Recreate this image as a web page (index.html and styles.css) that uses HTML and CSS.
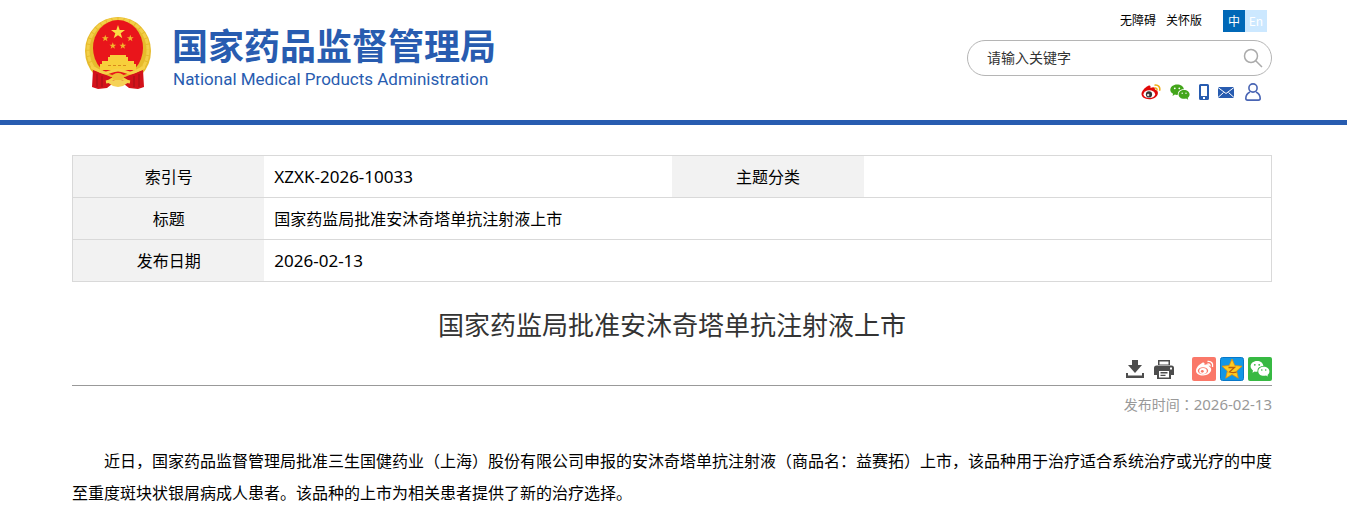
FILE: index.html
```html
<!DOCTYPE html>
<html lang="zh-CN">
<head>
<meta charset="utf-8">
<meta name="viewport" content="width=device-width, initial-scale=1">
<title>国家药监局批准安沐奇塔单抗注射液上市</title>
<link rel="stylesheet" href="styles.css">
</head>
<body>
<header class="header">
  <a class="brand" href="#">
    <svg class="emblem" viewBox="0 0 68 74" aria-hidden="true">
      <ellipse cx="34" cy="35" rx="33" ry="34" fill="#e6bb2c"/>
      <ellipse cx="34" cy="34" rx="30" ry="31" fill="none" stroke="#f3cf48" stroke-width="3" stroke-dasharray="5 1"/>
      <ellipse cx="34" cy="32" rx="25" ry="28" fill="#e9151b"/>
      <path fill="#fbdc45" d="M34 9l1.700 5h5.300l-4.300 3.200 1.600 5.100-4.300-3.100-4.300 3.100 1.600-5.100L27 14h5.300z"/>
      <g fill="#f3b52b">
        <path id="star" d="M21.300 18.800l.9 2.400h2.500l-2 1.600.7 2.500-2.100-1.500-2.100 1.500.7-2.500-2-1.600h2.500z"/>
        <use href="#star" x="25"/><use href="#star" x="7.500" y="7.500"/><use href="#star" x="17.500" y="7.500"/>
      </g>
      <path fill="#f7cf3b" d="M26 39h16v2h2v4h6v3h2v6H16v-6h2v-3h6v-4h2z"/>
      <path stroke="#d98a1b" stroke-dasharray="3 2" d="M24 49.500h20"/>
      <path fill="#d3121b" d="M9 54l11 4 7 3h14l7-3 11-4 1 17-6 2-9-1-5-4H28l-5 4-9 1-6-2z"/>
      <path fill="none" stroke="#f6d149" stroke-width="3" d="M7 51c5 1 9 6 15 6 4 0 6-3 12-3s8 3 12 3c6 0 10-5 15-6M22 66c6-1 7-5 12-5s6 4 12 5"/>
      <ellipse cx="34" cy="61" rx="6" ry="4" fill="#efbf36"/>
      <path fill="#f5d257" d="M23 66l8-2h6l8 2-6 4-5 1-5-1z"/>
      <path fill="none" stroke="#9f1018" d="M13 58v13M18 60v11M50 60v11M55 58v13"/>
    </svg>
    <span class="brand-text">
      <span class="brand-cn">国家药品监督管理局</span>
      <span class="brand-en" lang="en">National Medical Products Administration</span>
    </span>
  </a>
  <div class="tools">
    <nav class="top-links">
      <a class="text-link" href="#">无障碍</a>
      <a class="text-link" href="#">关怀版</a>
      <span class="langs"><a class="lang-cn" href="#">中</a><a class="lang-en" href="#" lang="en">En</a></span>
    </nav>
    <form class="search">
      <input type="text" class="search-input" placeholder="请输入关键字" aria-label="请输入关键字">
      <button class="search-button" type="button" aria-label="搜索">
        <svg width="20" height="20" viewBox="0 0 20 20" fill="none" stroke="#aaa" stroke-width="1.500"><circle cx="8" cy="8" r="6.500"/><path d="M12.500 12.500l6.500 6.500"/></svg>
      </button>
    </form>
    <div class="contacts">
      <a href="#" aria-label="微博"><svg width="20" height="16" viewBox="0 0 20 16">
        <path fill="#e10808" d="M7 2c2-1 3 0 2.500 2 3-1.300 5-.7 4.400 1.500 2 .6 3 1.700 3 3.400 0 3.500-4 6.300-8.700 6.300C3.600 15.200.5 13 .5 10 .5 7 4 3.400 7 2z"/>
        <ellipse cx="8.300" cy="10.200" rx="5.800" ry="3.900" fill="#fff"/><circle cx="8" cy="10.400" r="3.100" fill="#333"/><circle cx="7.200" cy="11" r="1.200" fill="#ddd"/>
        <path d="M13.500 1.200c3.700-.7 6.200 2 5 5.500M13.500 4c1.800-.3 2.900.8 2.400 2.400" fill="none" stroke="#efac10" stroke-width="1.500"/></svg></a>
      <a href="#" aria-label="微信"><svg width="20" height="16" viewBox="0 0 20 16" fill="#43a51a">
        <path d="M7 .5c3.800 0 6.500 2 6.900 4.700C10.300 5 7.600 7.300 7.900 10.800c-1 .2-2 .1-3-.2L2.500 12l.6-2.300C1.200 8.600.3 7.400.3 5.700.3 2.800 3.300.5 7 .5z"/>
        <path d="M14 6c3.200 0 5.600 2 5.600 4.500 0 1.400-.7 2.500-1.900 3.300l.5 1.900-2.100-1.100c-4.200 1-7.500-1.100-7.500-4.100C8.600 8 11 6 14 6z"/>
        <g fill="#fff"><circle cx="4.800" cy="4.300" r=".9"/><circle cx="9.300" cy="4.300" r=".9"/><circle cx="12.200" cy="9.200" r=".7"/><circle cx="16" cy="9.200" r=".7"/></g></svg></a>
      <a href="#" aria-label="手机"><svg width="10" height="16" viewBox="0 0 10 16"><path fill="#285cb0" fill-rule="evenodd" d="M1.500 0h7Q10 0 10 1.500v13Q10 16 8.500 16h-7Q0 16 0 14.500v-13Q0 0 1.500 0zM2 2v10h6V2zM4 13v2h2v-2z"/></svg></a>
      <a href="#" aria-label="邮箱"><svg width="16" height="11" viewBox="0 0 16 11"><path fill="#285cb0" d="M0 0h16v11H0z"/><path fill="none" stroke="#fff" d="M0 .5l8 6 8-6M0 10.500l5.500-5M16 10.500l-5.500-5"/></svg></a>
      <a href="#" aria-label="用户"><svg width="16" height="18" viewBox="0 0 16 18" fill="none" stroke="#4965b4" stroke-width="1.600"><circle cx="8" cy="5" r="4.100"/><path d="M5 9C2.300 10.300.9 12.300.8 15.300q0 1.800 1.700 1.800h11q1.700 0 1.700-1.800C15.100 12.300 13.700 10.300 11 9"/></svg></a>
    </div>
  </div>
</header>
<main class="main">
  <table class="info">
    <colgroup><col class="col-label"><col class="col-value"><col class="col-label"><col class="col-value"></colgroup>
    <tbody>
      <tr><th scope="row">索引号</th><td class="number">XZXK-2026-10033</td><th scope="row">主题分类</th><td></td></tr>
      <tr><th scope="row">标题</th><td colspan="3">国家药监局批准安沐奇塔单抗注射液上市</td></tr>
      <tr><th scope="row">发布日期</th><td colspan="3" class="number">2026-02-13</td></tr>
    </tbody>
  </table>
  <h1 class="title">国家药监局批准安沐奇塔单抗注射液上市</h1>
  <div class="actions">
    <button type="button" aria-label="下载"><svg width="18" height="18" viewBox="0 0 18 18" fill="#4d4d4d"><path d="M6 0h6v5h4l-7 8-7-8h4z"/><path d="M0 13h2v2.500h14V13h2v5H0z"/></svg></button>
    <button type="button" class="print" aria-label="打印"><svg width="20" height="20" viewBox="0 0 20 20"><path fill="#4d4d4d" d="M4 1h12v5H4zM2.500 6.500h15Q20 6.500 20 9v7h-3v4H3v-4H0V9q0-2.500 2.500-2.500z"/><path fill="#fff" d="M5.500 2.500h9v3h-9zM5 12h10v6.500H5zM16 8.500h2v2h-2z"/><path fill="#4d4d4d" d="M6.500 13h7v1.500h-7zM6.500 15.800h5v1.200h-5z"/></svg></button>
    <a href="#" aria-label="分享到微博"><svg width="24" height="24" viewBox="0 0 24 24"><rect width="24" height="24" rx="2" fill="#fa7869"/><path fill="#fff" d="M10 6c2-1 3 0 2.500 2 3-1.300 5-.7 4.400 1.500 1.500.6 2.300 1.500 2.300 3.100 0 3.300-3.700 5.900-8 5.900C7 18.500 4 16.500 4 13.700 4 10.900 7 7.500 10 6z"/><ellipse cx="11" cy="13.800" rx="5.200" ry="3.500" fill="#fa7869"/><ellipse cx="11" cy="14" rx="3.800" ry="3" fill="#fff"/><circle cx="10.300" cy="14.300" r="1.400" fill="#fa7869"/><path d="M15.500 4.500c3.800-.6 6 2 5 5.500M15.500 7c1.800-.3 2.900.8 2.400 2.400" fill="none" stroke="#fff" stroke-width="1.400"/></svg></a>
    <a href="#" aria-label="分享到QQ空间"><svg width="24" height="24" viewBox="0 0 24 24"><rect x=".5" y=".5" width="23" height="23" rx="2" fill="#1296e6" stroke="#0878c8"/><path fill="#ffcc20" stroke="#e58d0b" stroke-width=".8" d="M12 2l2.800 6.500 7.200.7-5.400 4.800 1.700 7.200L12 17.500l-6.300 3.700L7.400 14 2 9.200l7.200-.7z"/><path fill="none" stroke="#b95d0c" stroke-width="1.300" d="M8.500 10.500h6l-5 4.500q3.500 1 7 .2"/></svg></a>
    <a href="#" aria-label="分享到微信"><svg width="24" height="24" viewBox="0 0 24 24"><rect width="24" height="24" rx="2" fill="#37b943"/><path fill="#fff" d="M9 4c3.500 0 6 2 6.400 4.900-3.800 0-6.300 2.200-5.800 5.700-1 .1-2 0-2.900-.2L4.500 15.700l.5-2.200C3.500 12.400 2.600 11 2.600 9.300 2.600 6.300 5.400 4 9 4zM15.700 9.800c3.100 0 5.700 2 5.700 4.700 0 1.400-.7 2.500-1.900 3.400l.4 1.700-1.900-1c-4.100 1-7.700-1-7.700-4.100 0-2.700 2.400-4.700 5.400-4.700z"/><g fill="#37b943"><circle cx="6.800" cy="7.800" r=".9"/><circle cx="11.200" cy="7.800" r=".9"/><circle cx="13.800" cy="13" r=".8"/><circle cx="17.700" cy="13" r=".8"/></g></svg></a>
  </div>
  <p class="published">发布时间<span class="mid" lang="zh-TW">：</span><time class="published-date" datetime="2026-02-13">2026-02-13</time></p>
  <article class="article">
    <p>近日，国家药品监督管理局批准三生国健药业（上海）股份有限公司申报的安沐奇塔单抗注射液（商品名：益赛拓）上市，该品种用于治疗适合系统治疗或光疗的中度至重度斑块状银屑病成人患者。该品种的上市为相关患者提供了新的治疗选择。</p>
  </article>
</main>
</body>
</html>
```
FILE: styles.css
```css
* { box-sizing: border-box; }

body {
  margin: 0;
  background: #fff;
  color: #000;
  font-family: "Noto Sans CJK SC", "Noto Sans", sans-serif;
  font-size: 16px;
}

a { color: inherit; text-decoration: none; }
button { padding: 0; border: 0; background: none; cursor: pointer; }
svg { display: block; }

.header {
  display: flex;
  justify-content: space-between;
  min-height: 125px;
  padding: 0 75px 0 72px;
  border-bottom: 5px solid #285cb0;
}

.brand {
  display: flex;
  align-items: flex-start;
  gap: 20px;
  padding: 16px 0 0 12px;
  color: #285cb0;
  white-space: nowrap;
}
.emblem { width: 68px; height: 74px; }
.brand-text { display: flex; flex-direction: column; padding-top: 6px; }
.brand-cn { font-size: 36px; font-weight: 700; line-height: 44px; }
.brand-en { padding-left: 1px; font-family: Roboto, sans-serif; font-size: 17px; line-height: 26px; }

.tools {
  display: flex;
  flex-direction: column;
  align-items: flex-end;
  padding-top: 10px;
}
.top-links {
  display: flex;
  align-items: flex-start;
  gap: 10px;
  padding-right: 5px;
  font-size: 12px;
  line-height: 22px;
}
.text-link { line-height: 20px; }
.langs { display: flex; margin-left: 11px; color: #fff; text-align: center; }
.lang-cn, .lang-en { width: 22px; }
.lang-cn { background: #0068b7; }
.lang-en { background: #cce8ff; }

.search {
  display: flex;
  align-items: center;
  width: 305px;
  height: 36px;
  margin-top: 8px;
  padding: 0 8px 0 19px;
  border: 1px solid #b5b5b5;
  border-radius: 18px;
}
.search-input {
  flex: 1;
  min-width: 0;
  padding: 0 0 2px;
  border: 0;
  outline: 0;
  background: none;
  font: inherit;
  font-size: 14px;
}
.search-input::placeholder { color: #333; opacity: 1; }

.contacts {
  display: flex;
  align-items: center;
  gap: 9px;
  padding: 7px 11px 0 0;
}
.contacts a:last-child { margin-left: 2px; }

.main { padding: 30px 75px 0 72px; }

.info {
  width: 100%;
  border: 1px solid #d9d9d9;
  border-collapse: collapse;
  table-layout: fixed;
}
.col-label { width: 16%; }
.col-value { width: 34%; }
.info tr { border-bottom: 1px solid #d9d9d9; }
.info th, .info td { height: 42px; padding: 0 10px 2px; line-height: 24px; }
.info th { background: #f2f2f2; font-weight: 400; text-align: center; }
.info .number { padding-bottom: 0; font-family: "Noto Sans", sans-serif; font-size: 17px; }

.title {
  margin: 22px 0 13px;
  color: #333;
  font-size: 26px;
  font-weight: 400;
  line-height: 40px;
  text-align: center;
}

.actions {
  display: flex;
  align-items: center;
  justify-content: flex-end;
  gap: 4px;
  padding-bottom: 4px;
  border-bottom: 1px solid #999;
}
.print { margin: 0 14px 0 6px; }

.published {
  margin: 6px 0 0;
  color: #999;
  font-size: 14px;
  line-height: 24px;
  text-align: right;
}
.published-date { font-family: "Noto Sans", sans-serif; font-size: 15px; }
.mid { font-family: "Noto Sans CJK TC", sans-serif; }

.article { margin-right: -1px; padding: 28px 0 6px; line-height: 32px; }
.article p { margin: 0; text-indent: 2em; }
```
